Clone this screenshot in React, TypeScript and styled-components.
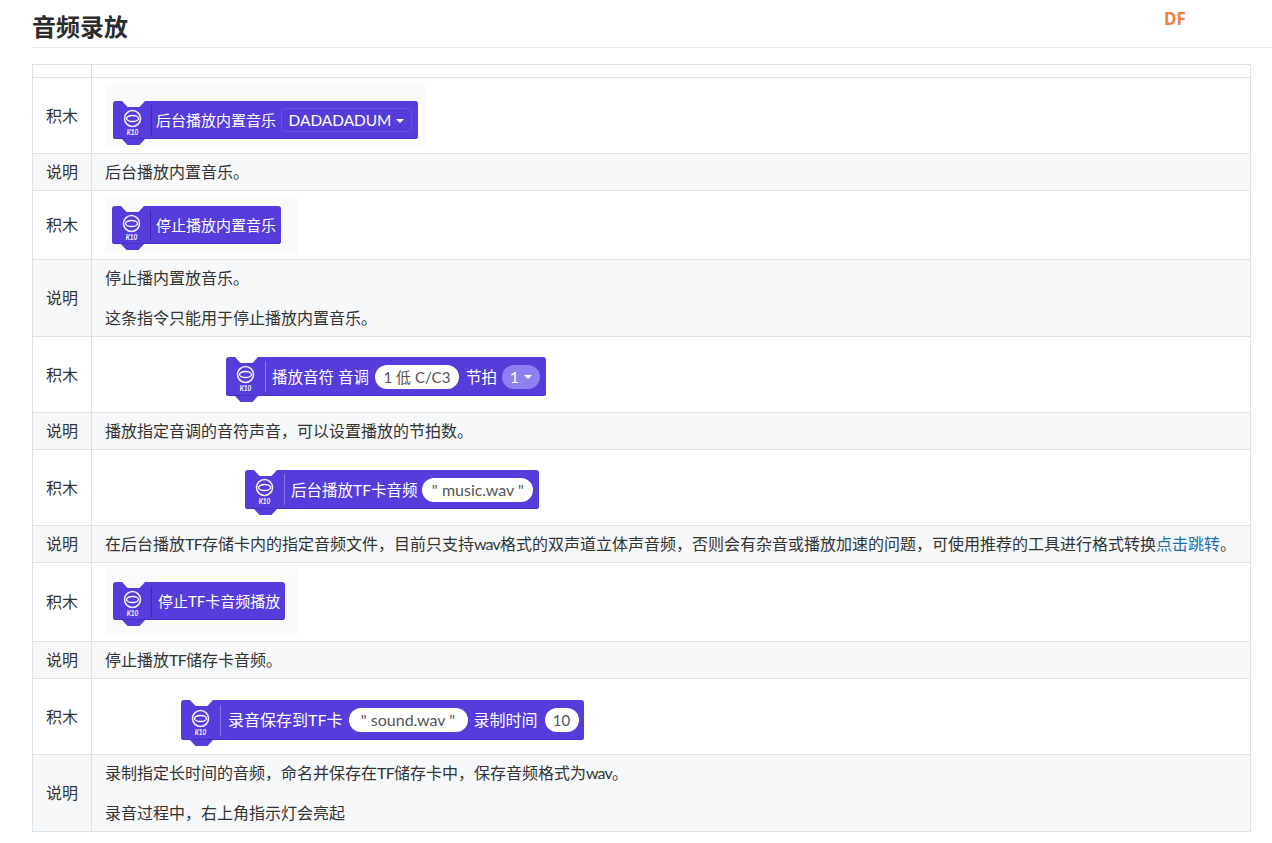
import React from "react";
import styled, { createGlobalStyle } from "styled-components";

const GlobalStyle = createGlobalStyle`
    html, body {
        margin: 0;
        padding: 0;
        background: #fff;
    }
    body {
        font-family: Lato, "Noto Sans CJK SC", sans-serif;
        font-size: 16px;
        line-height: 24px;
        color: #333;
    }
`;

const Page = styled.div`
    position: relative;
    height: 843px;
    overflow: hidden;
    padding-left: 32px;
`;

const Title = styled.h2`
    margin: 0;
    height: 48px;
    padding-top: 9px;
    box-sizing: border-box;
    border-bottom: 1px solid #eaecef;
    font-size: 24px;
    line-height: 36px;
    font-weight: 700;
    color: #2c2c2c;
`;

const Watermark = styled.div`
    position: absolute;
    top: 8px;
    left: 1164px;
    font-family: "Noto Sans", sans-serif;
    font-size: 17px;
    line-height: 22px;
    font-weight: 700;
    color: #f0813f;
`;

const Table = styled.table`
    margin-top: 16px;
    width: 1219px;
    table-layout: fixed;
    border-collapse: collapse;
`;

const HeadCell = styled.th`
    height: 12px;
    padding: 0;
    border: 1px solid #dfe2e5;
`;

const Row = styled.tr<{ $alt?: boolean }>`
    background: ${p => (p.$alt ? "#f6f8fa" : "#fff")};
`;

const NameCell = styled.td`
    padding: 6px 0;
    border: 1px solid #dfe2e5;
    text-align: center;
`;

const BodyCell = styled.td`
    padding: 6px 13px;
    border: 1px solid #dfe2e5;
    white-space: nowrap;
`;

const Para = styled.p`
    margin: 0;
    & + & {
        margin-top: 16px;
    }
`;

const Link = styled.a`
    color: #1a6fb0;
    text-decoration: none;
`;

/* latin words inside the chinese copy run a little tighter in the original */
const Latin = styled.span`
    letter-spacing: -0.8px;
`;

const Snapshot = styled.div<{ $w?: number; $h: number; $x: number; $y: number; $shade?: boolean; $dots?: boolean }>`
    box-sizing: border-box;
    width: ${p => (p.$w ? `${p.$w}px` : "auto")};
    height: ${p => p.$h}px;
    padding: ${p => p.$y}px 0 0 ${p => p.$x}px;
    background-color: ${p => (p.$shade ? "#fafafb" : "transparent")};
    background-image: ${p => (p.$dots ? "radial-gradient(circle, #e6e6ea 1px, transparent 1.2px)" : "none")};
    background-size: 27px 27px;
`;

const BLOCK = "#573cdc";

const Block = styled.div<{ $page: string; $h?: number; $size?: number; $pad?: number }>`
    position: relative;
    display: inline-flex;
    align-items: center;
    height: ${p => p.$h ?? 38}px;
    padding-right: ${p => p.$pad ?? 5}px;
    background: ${BLOCK};
    border-radius: 3px;
    box-shadow: inset 0 -1px 0 #4a2fc4;
    color: #fff;
    font-size: ${p => p.$size ?? 15}px;
    white-space: nowrap;

    /* notch on top, drawn in the colour of what lies behind the block */
    &::before {
        content: "";
        position: absolute;
        top: 0;
        left: 9px;
        width: 23px;
        height: 6px;
        background: ${p => p.$page};
        clip-path: polygon(0 0, 100% 0, 76% 100%, 24% 100%);
    }

    /* tab under the block */
    &::after {
        content: "";
        position: absolute;
        top: 100%;
        left: 9px;
        width: 23px;
        height: 6px;
        background: ${BLOCK};
        clip-path: polygon(0 0, 100% 0, 76% 100%, 24% 100%);
    }
`;

const Hat = styled.div<{ $dark?: boolean; $wide?: boolean; $gap: number }>`
    flex: none;
    position: relative;
    width: ${p => (p.$wide ? 39 : 38)}px;
    height: 31px;
    margin-right: ${p => p.$gap}px;
    border-right: 1px solid ${p => (p.$dark ? "#4229b4" : "#8a76ee")};
`;

const HatIcon = styled.svg`
    position: absolute;
    top: 4px;
    left: 10px;
`;

const HatText = styled.span`
    position: absolute;
    top: 24px;
    left: 9px;
    width: 21px;
    text-align: center;
    font-size: 6.5px;
    line-height: 7px;
    font-weight: 700;
    font-style: italic;
`;

const Label = styled.span<{ $before?: number; $after?: number }>`
    margin-left: ${p => p.$before ?? 0}px;
    margin-right: ${p => p.$after ?? 0}px;
`;

const Field = styled.span<{ $kind: "outline" | "white" | "lilac"; $w: number; $size?: number }>`
    display: inline-flex;
    align-items: center;
    justify-content: center;
    box-sizing: border-box;
    width: ${p => p.$w}px;
    height: 24px;
    border-radius: ${p => (p.$kind === "outline" ? "4px" : "12px")};
    border: ${p => (p.$kind === "outline" ? "1px solid #6a50e4" : "none")};
    background: ${p => (p.$kind === "white" ? "#fff" : p.$kind === "lilac" ? "#8f80f2" : "transparent")};
    color: ${p => (p.$kind === "white" ? "#555" : "#fff")};
    font-size: ${p => p.$size ?? 16}px;
`;

const Caret = styled.i`
    width: 0;
    height: 0;
    margin: 1px 0 0 5px;
    border-left: 4px solid transparent;
    border-right: 4px solid transparent;
    border-top: 4px solid #fff;
`;

const K10Hat = ({ dark, wide, gap = 4 }: { dark?: boolean; wide?: boolean; gap?: number }) => (
    <Hat $dark={dark} $wide={wide} $gap={gap}>
        <HatIcon width="19" height="19" viewBox="0 0 19 19" fill="none" stroke="#fff">
            <circle cx="9.5" cy="9.5" r="8" strokeWidth="1.6" opacity="0.9" />
            <ellipse cx="9.5" cy="9.5" rx="6" ry="3" strokeWidth="1.3" />
        </HatIcon>
        <HatText>K10</HatText>
    </Hat>
);

export default function App() {
    return (
        <>
            <GlobalStyle />
            <Page>
                <Title>音频录放</Title>
                <Watermark>DF</Watermark>
                <Table>
                    <colgroup>
                        <col width="59" />
                        <col />
                    </colgroup>
                    <thead>
                        <tr>
                            <HeadCell />
                            <HeadCell />
                        </tr>
                    </thead>
                    <tbody>
                        <Row>
                            <NameCell>积木</NameCell>
                            <BodyCell>
                                <Snapshot $w={320} $h={63} $x={8} $y={17} $shade>
                                    <Block $page="#fafafb" $pad={6}>
                                        <K10Hat dark />
                                        <Label $after={5}>后台播放内置音乐</Label>
                                        <Field $kind="outline" $w={131} $size={15.4}>
                                            DADADADUM<Caret />
                                        </Field>
                                    </Block>
                                </Snapshot>
                            </BodyCell>
                        </Row>
                        <Row $alt>
                            <NameCell>说明</NameCell>
                            <BodyCell>后台播放内置音乐。</BodyCell>
                        </Row>
                        <Row>
                            <NameCell>积木</NameCell>
                            <BodyCell>
                                <Snapshot $w={193} $h={56} $x={7} $y={9} $shade>
                                    <Block $page="#fafafb">
                                        <K10Hat dark gap={5} />
                                        <Label>停止播放内置音乐</Label>
                                    </Block>
                                </Snapshot>
                            </BodyCell>
                        </Row>
                        <Row $alt>
                            <NameCell>说明</NameCell>
                            <BodyCell>
                                <Para>停止播内置放音乐。</Para>
                                <Para>这条指令只能用于停止播放内置音乐。</Para>
                            </BodyCell>
                        </Row>
                        <Row>
                            <NameCell>积木</NameCell>
                            <BodyCell>
                                <Snapshot $h={63} $x={121} $y={14}>
                                    <Block $page="#fff" $h={39} $size={15.5} $pad={6}>
                                        <K10Hat wide gap={6} />
                                        <Label $after={6}>播放音符 音调</Label>
                                        <Field $kind="white" $w={84} $size={15}>1 低 C/C3</Field>
                                        <Label $before={7} $after={5}>节拍</Label>
                                        <Field $kind="lilac" $w={38}>1<Caret /></Field>
                                    </Block>
                                </Snapshot>
                            </BodyCell>
                        </Row>
                        <Row $alt>
                            <NameCell>说明</NameCell>
                            <BodyCell>播放指定音调的音符声音，可以设置播放的节拍数。</BodyCell>
                        </Row>
                        <Row>
                            <NameCell>积木</NameCell>
                            <BodyCell>
                                <Snapshot $h={63} $x={140} $y={14}>
                                    <Block $page="#fff" $h={39} $size={15.5} $pad={6}>
                                        <K10Hat wide gap={6} />
                                        <Label $after={5}>后台播放TF卡音频</Label>
                                        <Field $kind="white" $w={111}>" music.wav "</Field>
                                    </Block>
                                </Snapshot>
                            </BodyCell>
                        </Row>
                        <Row $alt>
                            <NameCell>说明</NameCell>
                            <BodyCell>
                                在后台播放<Latin>TF</Latin>存储卡内的指定音频文件，目前只支持<Latin>wav</Latin>格式的双声道立体声音频，否则会有杂音或播放加速的问题，可使用推荐的工具进行格式转换<Link>点击跳转</Link>。
                            </BodyCell>
                        </Row>
                        <Row>
                            <NameCell>积木</NameCell>
                            <BodyCell>
                                <Snapshot $w={193} $h={66} $x={8} $y={13} $shade $dots>
                                    <Block $page="#fafafb">
                                        <K10Hat dark gap={6} />
                                        <Label>停止TF卡音频播放</Label>
                                    </Block>
                                </Snapshot>
                            </BodyCell>
                        </Row>
                        <Row $alt>
                            <NameCell>说明</NameCell>
                            <BodyCell>停止播放<Latin>TF</Latin>储存卡音频。</BodyCell>
                        </Row>
                        <Row>
                            <NameCell>积木</NameCell>
                            <BodyCell>
                                <Snapshot $h={63} $x={76} $y={15}>
                                    <Block $page="#fff" $h={40} $size={16} $pad={5}>
                                        <K10Hat wide gap={7} />
                                        <Label $after={6}>录音保存到TF卡</Label>
                                        <Field $kind="white" $w={119}>" sound.wav "</Field>
                                        <Label $before={6} $after={7}>录制时间</Label>
                                        <Field $kind="white" $w={34} $size={15}>10</Field>
                                    </Block>
                                </Snapshot>
                            </BodyCell>
                        </Row>
                        <Row $alt>
                            <NameCell>说明</NameCell>
                            <BodyCell>
                                <Para>录制指定长时间的音频，命名并保存在<Latin>TF</Latin>储存卡中，保存音频格式为<Latin>wav</Latin>。</Para>
                                <Para>录音过程中，右上角指示灯会亮起</Para>
                            </BodyCell>
                        </Row>
                    </tbody>
                </Table>
            </Page>
        </>
    );
}
